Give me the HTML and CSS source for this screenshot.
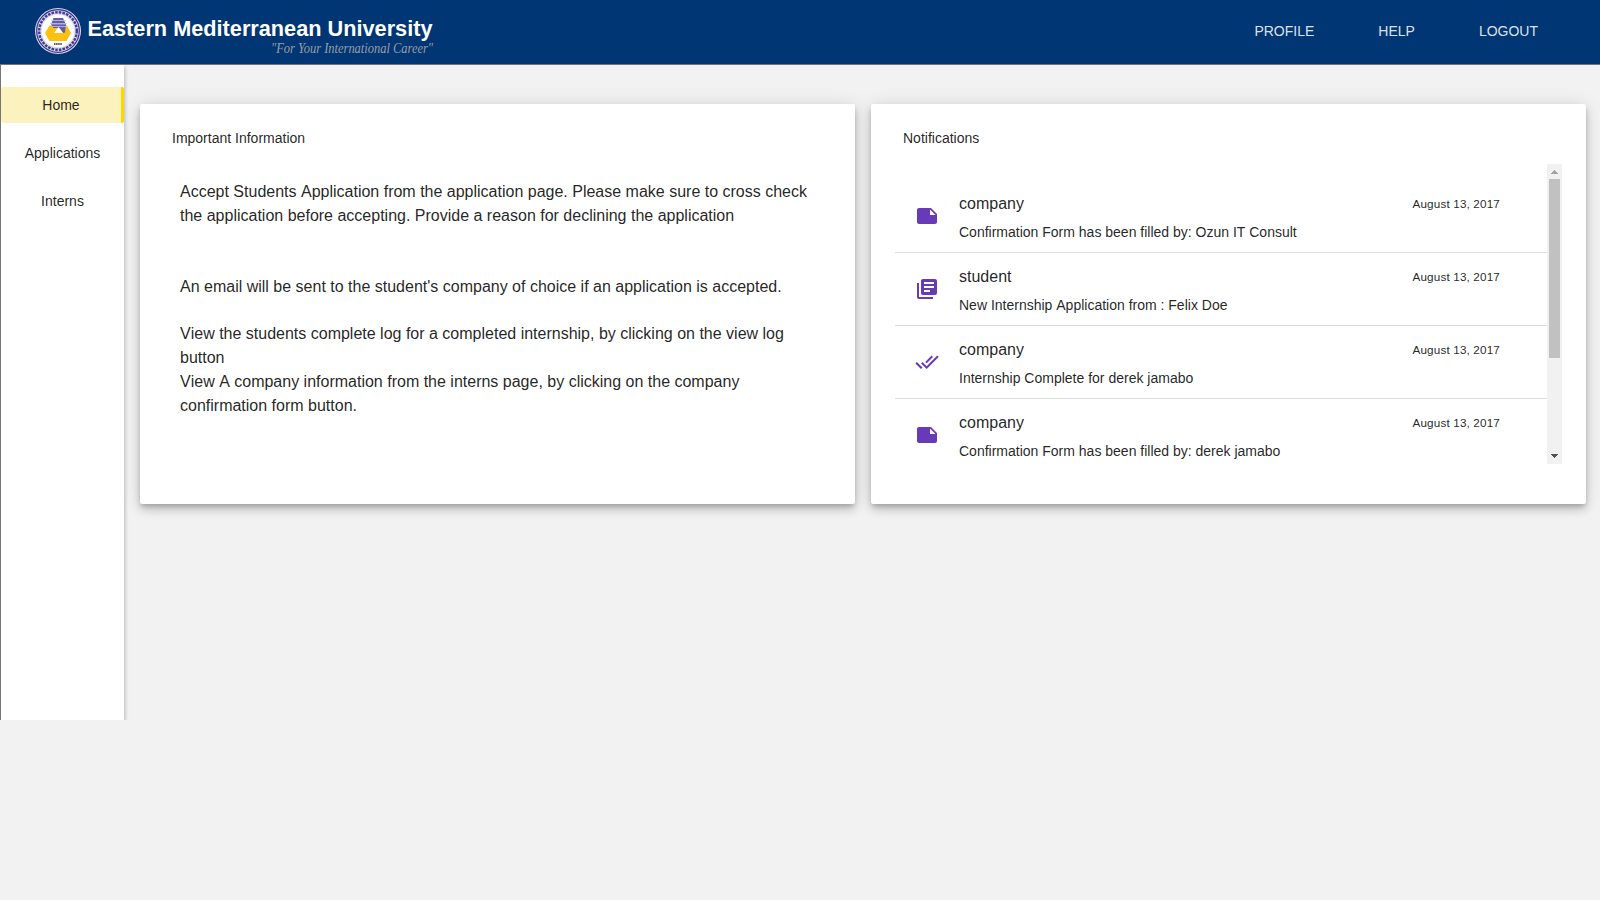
FILE: index.html
```html
<!DOCTYPE html>
<html lang="en">
<head>
<meta charset="utf-8">
<title>Eastern Mediterranean University</title>
<link rel="stylesheet" href="styles.css">
</head>
<body>
<svg class="sprite" aria-hidden="true">
  <symbol id="note" viewBox="0 0 24 24"><path d="M22 10l-6-6H4c-1.100 0-2 .9-2 2v12.010c0 1.100.9 1.990 2 1.990l16-.010c1.100 0 2-.89 2-1.990v-8zm-7-4.500l5.500 5.500H15V5.500z"/></symbol>
  <symbol id="books" viewBox="0 0 24 24"><path d="M4 6H2v14c0 1.100.9 2 2 2h14v-2H4V6zm16-4H8c-1.100 0-2 .9-2 2v12c0 1.100.9 2 2 2h12c1.100 0 2-.9 2-2V4c0-1.100-.9-2-2-2zm-1 9H9V9h10v2zm-4 4H9v-2h6v2zm4-8H9V5h10v2z"/></symbol>
  <symbol id="done" viewBox="0 0 24 24"><path d="M18 7l-1.410-1.410-6.340 6.340 1.410 1.410L18 7zm4.240-1.410L11.660 16.170 7.480 12l-1.410 1.410L11.660 19l12-12-1.420-1.410zM.41 13.410L6 19l1.410-1.410L1.830 12 .41 13.410z"/></symbol>
</svg>
<header class="topbar">
  <svg class="logo" width="420" height="60" viewBox="30 0 420 60">
    <circle cx="58" cy="31" r="23" fill="#dcd9ee"/>
    <circle cx="58" cy="31" r="21.300" fill="none" stroke="#36318a" stroke-width="1.200"/>
    <circle cx="58" cy="31" r="18.800" fill="none" stroke="#403b91" stroke-width="2.400" stroke-dasharray="2.600 1.100"/>
    <circle cx="58" cy="31" r="16.300" fill="#fff"/>
    <path d="M49.500 25.500H67L71 33l-4.500 8h-17L45 33z" fill="#fdc010"/>
    <path d="M53.500 18h9.500l3 6.500h-15z" fill="#625da9"/>
    <path d="M51 24.500h15l-1 8-2 .500-3.500-5h-6z" fill="#625da9"/>
    <path d="M51 20.500h15M50 23.500h17M52 26.500h15" stroke="#c9c7e3" stroke-width=".8"/>
    <path d="M58.500 27l4.500 6h-9z" fill="#fff"/>
    <path d="M54 44h8" stroke="#555" stroke-width="2" stroke-dasharray="1.500 .6"/>
    <text class="logo-name" x="87.500" y="36.300" textLength="345" lengthAdjust="spacingAndGlyphs">Eastern Mediterranean University</text>
    <text class="logo-tag" x="271" y="53" textLength="162" lengthAdjust="spacingAndGlyphs">"For Your International Career"</text>
  </svg>
  <nav class="topnav"><a>PROFILE</a><a>HELP</a><a>LOGOUT</a></nav>
</header>
<div class="body">
  <aside class="sidebar">
    <a class="side-item active">Home</a>
    <a class="side-item">Applications</a>
    <a class="side-item">Interns</a>
  </aside>
  <main class="content">
    <section class="card">
      <h2 class="card-title">Important Information</h2>
      <div class="info">
        <p>Accept Students Application from the application page. Please make sure to cross check<br>the application before accepting. Provide a reason for declining the application</p>
        <p class="mail">An email will be sent to the student's company of choice if an application is accepted.</p>
        <p class="log">View the students complete log for a completed internship, by clicking on the view log<br>button</p>
        <p>View A company information from the interns page, by clicking on the company<br>confirmation form button.</p>
      </div>
    </section>
    <section class="card">
      <h2 class="card-title">Notifications</h2>
      <div class="scroller">
        <ul class="list">
          <li class="row"><svg class="icon"><use href="#note"/></svg><div class="text"><h3>company</h3><p>Confirmation Form has been filled by: Ozun IT Consult</p></div><time>August 13, 2017</time></li>
          <li class="row"><svg class="icon"><use href="#books"/></svg><div class="text"><h3>student</h3><p>New Internship Application from : Felix Doe</p></div><time>August 13, 2017</time></li>
          <li class="row"><svg class="icon"><use href="#done"/></svg><div class="text"><h3>company</h3><p>Internship Complete for derek jamabo</p></div><time>August 13, 2017</time></li>
          <li class="row"><svg class="icon"><use href="#note"/></svg><div class="text"><h3>company</h3><p>Confirmation Form has been filled by: derek jamabo</p></div><time>August 13, 2017</time></li>
        </ul>
        <div class="scrollbar">
          <svg class="arrow" viewBox="0 0 15 15" shape-rendering="crispEdges"><path d="M4 10h7L7.500 6z" fill="#a3a3a3"/></svg>
          <div class="thumb"></div>
          <svg class="arrow" viewBox="0 0 15 15" shape-rendering="crispEdges"><path d="M4 5h7L7.500 9z" fill="#505050"/></svg>
        </div>
      </div>
    </section>
  </main>
</div>
</body>
</html>
```
FILE: styles.css
```css
* { box-sizing: border-box; }
body {
  margin: 0;
  height: 900px;
  overflow: hidden;
  background: #f2f2f2;
  color: rgba(0, 0, 0, .87);
  font-family: "Liberation Sans", Arial, sans-serif;
  font-size: 14px;
  font-kerning: none;
}
h2, h3, p, ul { margin: 0; padding: 0; font-weight: 400; }
.sprite { display: none; }
.topbar {
  display: flex;
  justify-content: space-between;
  height: 65px;
  padding: 0 62px 0 30px;
  background: #003673;
  border-bottom: 1px solid #6f7378;
}
.logo { display: block; overflow: visible; }
.logo-name { font: bold 22.500px "Liberation Sans", sans-serif; fill: #fff; }
.logo-tag { font: italic 14px "Liberation Serif", serif; fill: #9b9ea6; }
.topnav {
  display: flex;
  gap: 64px;
  padding-top: 23px;
  line-height: 16px;
  color: rgba(255, 255, 255, .87);
}
.body { display: flex; }
.sidebar {
  display: flex;
  flex-direction: column;
  gap: 12px;
  width: 124px;
  height: 655px;
  padding-top: 22px;
  background: #fff;
  border-left: 1px solid #757575;
  box-shadow: 1px 2px 4px rgba(0, 0, 0, .24);
  clip-path: inset(0 -8px 0 0);
}
.side-item {
  height: 36px;
  line-height: 36px;
  text-align: center;
  border-radius: 2px;
}
.active { background: #fcf2be; border-right: 3px solid #ffd600; }
.content { display: flex; gap: 16px; padding: 39px 0 0 16px; }
.card {
  width: 715px;
  height: 400px;
  padding: 26px 24px 0;
  background: #fff;
  border-radius: 2px;
  box-shadow: 0 3px 5px -1px rgba(0, 0, 0, .2), 0 6px 10px 0 rgba(0, 0, 0, .14), 0 1px 18px 0 rgba(0, 0, 0, .12);
}
.card-title { padding-left: 8px; font-size: 14px; line-height: 16px; }
.info { padding: 34px 0 0 16px; font-size: 16px; line-height: 24px; white-space: nowrap; }
.mail { margin-top: 47px; }
.log { margin-top: 23px; }
.scroller { display: flex; height: 300px; margin-top: 18px; overflow: hidden; }
.list { width: 652px; padding-top: 16px; list-style: none; }
.row {
  display: flex;
  height: 73px;
  padding: 0 47px 0 20px;
  border-bottom: 1px solid #dedede;
}
.icon { width: 24px; height: 24px; margin-top: 24px; fill: #673ab7; }
.text { flex: 1; padding: 14px 0 0 20px; }
.text h3 { font-size: 16px; line-height: 20px; }
.text p { margin-top: 10px; font-size: 14px; line-height: 16px; }
.row time { padding-top: 17px; font-size: 11.700px; letter-spacing: .16px; line-height: 14px; }
.scrollbar { display: flex; flex-direction: column; width: 15px; background: #f1f1f1; }
.arrow { display: block; width: 15px; height: 15px; }
.thumb { width: 11px; height: 179px; margin: 0 2px 91px; background: #c1c1c1; }
```
